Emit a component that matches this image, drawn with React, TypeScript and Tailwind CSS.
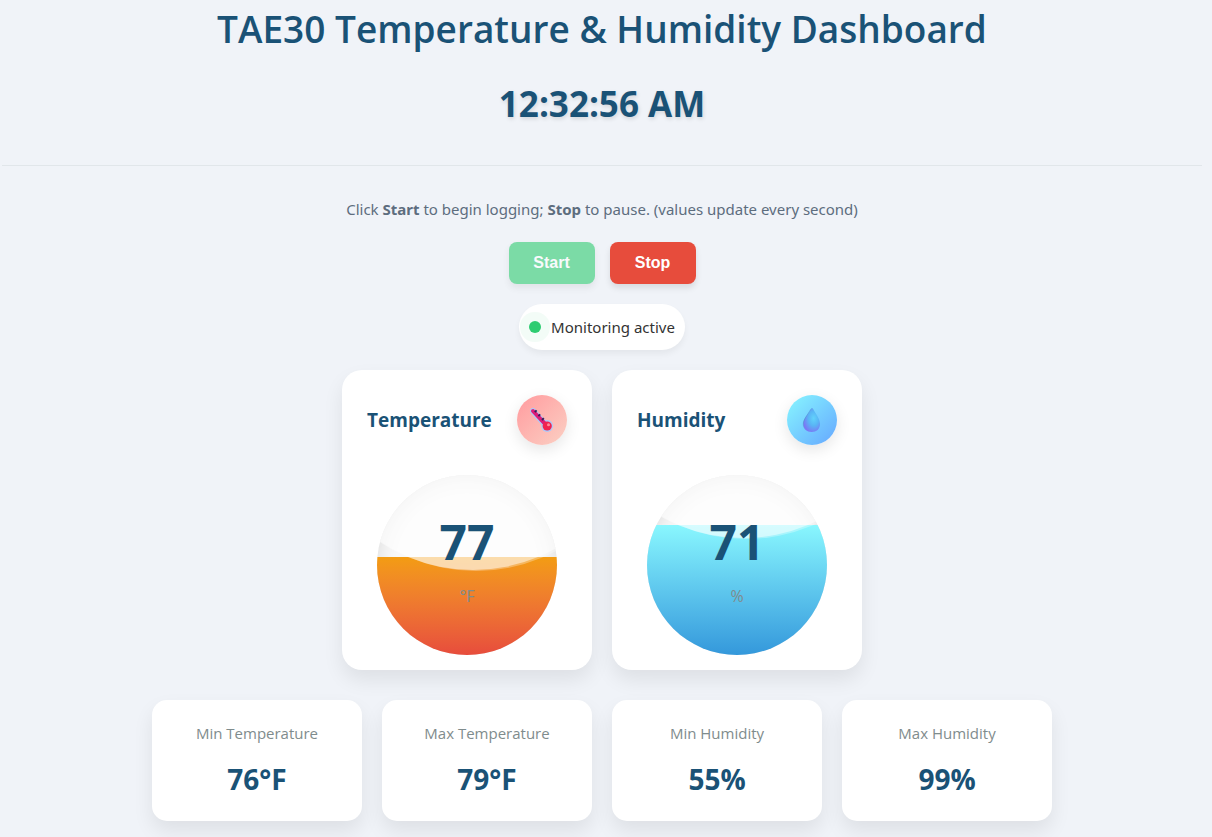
import type { ReactNode } from 'react';

function Thermometer() {
  return (
    <svg viewBox="0 0 24 24" className="size-6" aria-hidden="true">
      <path d="M3 3 L16.5 18" stroke="#abc8fa" strokeWidth="6" strokeLinecap="round" />
      <circle cx="17.2" cy="18" r="5.9" fill="#abc8fa" />
      <path d="M3 3 L16.5 17.4" stroke="#dc1c78" strokeWidth="4" strokeLinecap="round" />
      <circle cx="17.2" cy="18" r="4.6" fill="#f0224f" />
      <circle cx="18.5" cy="16.8" r="1.5" fill="#ff8a9a" />
      <path d="M4.8 4.2 L6.6 2.4 M8.4 8.1 L10.2 6.3 M12 12 L13.8 10.2" stroke="#34205a" strokeWidth="1.9" />
    </svg>
  );
}

function Droplet() {
  return (
    <svg viewBox="0 0 24 24" className="size-6" aria-hidden="true">
      <defs>
        <radialGradient id="drop" cx="0.62" cy="0.42" r="0.62">
          <stop offset="0" stopColor="#62d2fb" />
          <stop offset="0.5" stopColor="#59b5f5" />
          <stop offset="1" stopColor="#7a78f5" />
        </radialGradient>
        <linearGradient id="dropEdge" x1="0" y1="0" x2="1" y2="0.6">
          <stop offset="0" stopColor="#3f83b8" stopOpacity="0.9" />
          <stop offset="0.5" stopColor="#3f83b8" stopOpacity="0" />
        </linearGradient>
      </defs>
      <path d="M11.4 0.6 C12.6 0 13 0.8 13.4 1.5 C16 6 20 11 20 16 C20 21 16.5 24 11.7 24 C6.9 24 3.3 21 3.3 16 C3.3 11.5 7.5 7 10.4 1.8 Z" fill="url(#drop)" stroke="url(#dropEdge)" strokeWidth="1" />
    </svg>
  );
}

type GaugeProps = {
  title: string;
  value: number;
  unit: string;
  fill: string;
  wave: string;
  badge: string;
  icon: ReactNode;
};

function Gauge({ title, value, unit, fill, wave, badge, icon }: GaugeProps) {
  return (
    <section className="w-[250px] rounded-[20px] bg-white px-[25px] pt-[25px] pb-[15px] shadow-[0_10px_20px_rgba(0,0,0,0.08)]">
      <div className="flex items-center justify-between">
        <h2 className="text-[19px] leading-7 font-bold text-[#1a5276]">{title}</h2>
        <span className={`flex size-[50px] items-center justify-center rounded-full shadow-[0_5px_15px_rgba(0,0,0,0.1)] ${badge}`}>
          {icon}
        </span>
      </div>
      <div className="relative mx-auto mt-[30px] size-[180px] overflow-hidden rounded-full bg-[#f8f8f8] shadow-[inset_0_0_20px_rgba(0,0,0,0.12)]">
        <div className={`absolute inset-x-0 bottom-0 ${fill}`} />
        <div className={`absolute -left-[74px] size-[340px] ${wave}`}>
          <div className="absolute inset-0 rounded-full bg-white/50" />
          <div className="absolute top-px left-[3px] size-full rounded-full bg-white/30" />
        </div>
        <div className="absolute inset-x-0 top-[33px] text-center">
          <div className="text-5xl leading-[68px] font-bold text-[#1a5276]">{value}</div>
          <div className="mt-2 text-base leading-6 text-[#7f8c8d]">{unit}</div>
        </div>
      </div>
    </section>
  );
}

const stats = [
  { label: 'Min Temperature', value: '76°F' },
  { label: 'Max Temperature', value: '79°F' },
  { label: 'Min Humidity', value: '55%' },
  { label: 'Max Humidity', value: '99%' },
];

export default function App() {
  return (
    <div className="min-h-screen bg-[#f0f3f8] pr-2.5 pb-4 pl-0.5 font-['Segoe_UI','Open_Sans',sans-serif] text-[#333333]">
      <div className="mx-auto flex max-w-[1200px] flex-col items-center">
        <header className="flex w-full flex-col items-center border-b border-[#e1e6ea] pb-[35px] text-[#1a5276]">
          <h1 className="text-center text-[37px] leading-[58px] font-semibold">TAE30 Temperature &amp; Humidity Dashboard</h1>
          <time className="mt-5 text-[35px] leading-[52px] font-bold [text-shadow:1px_2px_4px_rgba(0,0,0,0.12)]">12:32:56 AM</time>
        </header>
        <p className="mt-[31px] text-center font-['Noto_Sans',sans-serif] text-[15px] leading-6 text-[#5d6d7e]">
          Click <strong>Start</strong> to begin logging; <strong>Stop</strong> to pause. (values update every second)
        </p>
        <div className="mt-[21px] flex gap-[15px] font-['Liberation_Sans',Arial,sans-serif] text-base leading-[18px] font-bold text-white">
          <button disabled className="h-[42px] w-[86px] rounded-lg bg-[#2ecc71] opacity-60 shadow-[0_4px_6px_rgba(0,0,0,0.1)]">Start</button>
          <button className="h-[42px] w-[86px] rounded-lg bg-[#e74c3c] shadow-[0_4px_6px_rgba(0,0,0,0.1)]">Stop</button>
        </div>
        <div role="status" className="mt-5 flex h-[46px] items-center gap-2.5 rounded-full bg-white px-2.5 font-['Noto_Sans',sans-serif] text-[15px] leading-6 shadow-[0_4px_6px_rgba(0,0,0,0.05)]">
          <span className="size-3 rounded-full bg-[#2ecc71] shadow-[0_0_0_9px_rgba(46,204,113,0.06)]" />
          Monitoring active
        </div>
        <main className="mt-5 flex flex-wrap justify-center gap-5">
          <Gauge
            title="Temperature"
            value={77}
            unit="°F"
            fill="h-[98px] bg-linear-to-b from-[#f39c12] to-[#e74c3c]"
            wave="bottom-[85px]"
            badge="bg-linear-135 from-[#ff9a9e] to-[#fad0c4]"
            icon={<Thermometer />}
          />
          <Gauge
            title="Humidity"
            value={71}
            unit="%"
            fill="h-[130px] bg-linear-to-b from-[#89f7fe] to-[#3498db]"
            wave="bottom-[117px]"
            badge="bg-linear-135 from-[#89f7fe] to-[#66a6ff]"
            icon={<Droplet />}
          />
        </main>
        <dl className="mt-[30px] flex flex-wrap justify-center gap-5">
          {stats.map((s) => (
            <div key={s.label} className="h-[121px] w-[210px] rounded-[15px] bg-white pt-5 text-center shadow-[0_10px_20px_rgba(0,0,0,0.08)]">
              <dt className="text-[15px] leading-[26px] text-[#7f8c8d]">{s.label}</dt>
              <dd className="mt-3 text-[28px] leading-[42px] font-bold text-[#1a5276]">{s.value}</dd>
            </div>
          ))}
        </dl>
      </div>
    </div>
  );
}
